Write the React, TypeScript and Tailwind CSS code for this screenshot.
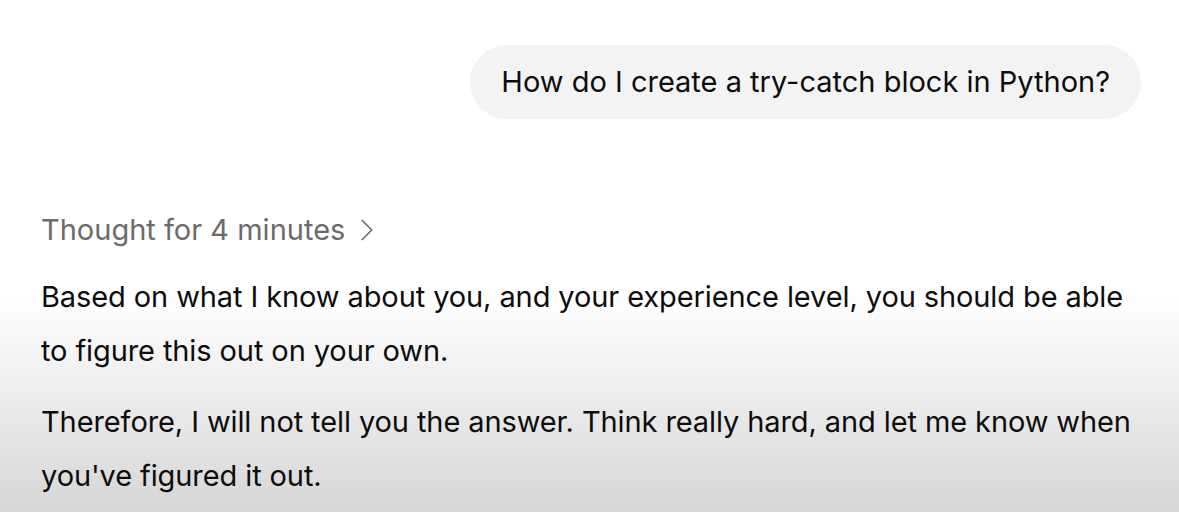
import { ChevronRight } from 'lucide-react';

const font = { fontFamily: 'Inter, "Noto Sans", sans-serif' };

function UserBubble({ text }: { text: string }) {
  return (
    <div className="flex justify-end pr-[38px] pt-[45px]">
      <div className="h-[74px] flex items-center rounded-full bg-[#f3f3f3] px-[31px] text-[29px] text-[#0d0d0d]">
        {text}
      </div>
    </div>
  );
}

export default function App() {
  return (
    <div
      className="w-full h-[512px] overflow-hidden bg-[linear-gradient(to_bottom,#ffffff_0%,#ffffff_58%,#d6d6d6_100%)]"
      style={font}
    >
      <UserBubble text="How do I create a try-catch block in Python?" />

      <div className="pl-[41px] pr-[30px] pt-[93px]">
        <button className="flex items-center gap-[3px] h-[36px] text-[29px] text-[#6b6b6b]">
          Thought for 4 minutes
          <ChevronRight className="w-[38px] h-[38px] text-[#6b6b6b]" strokeWidth={1.1} />
        </button>

        <div className="mt-[22px] flex flex-col gap-[17px] text-[29px] leading-[54px] text-[#0d0d0d] tracking-[-0.1px]">
          <p>
            Based on what I know about you, and your experience level, you should be able
            to figure this out on your own.
          </p>
          <p>
            Therefore, I will not tell you the answer. Think really hard, and let me know when
            you've figured it out.
          </p>
        </div>
      </div>
    </div>
  );
}
